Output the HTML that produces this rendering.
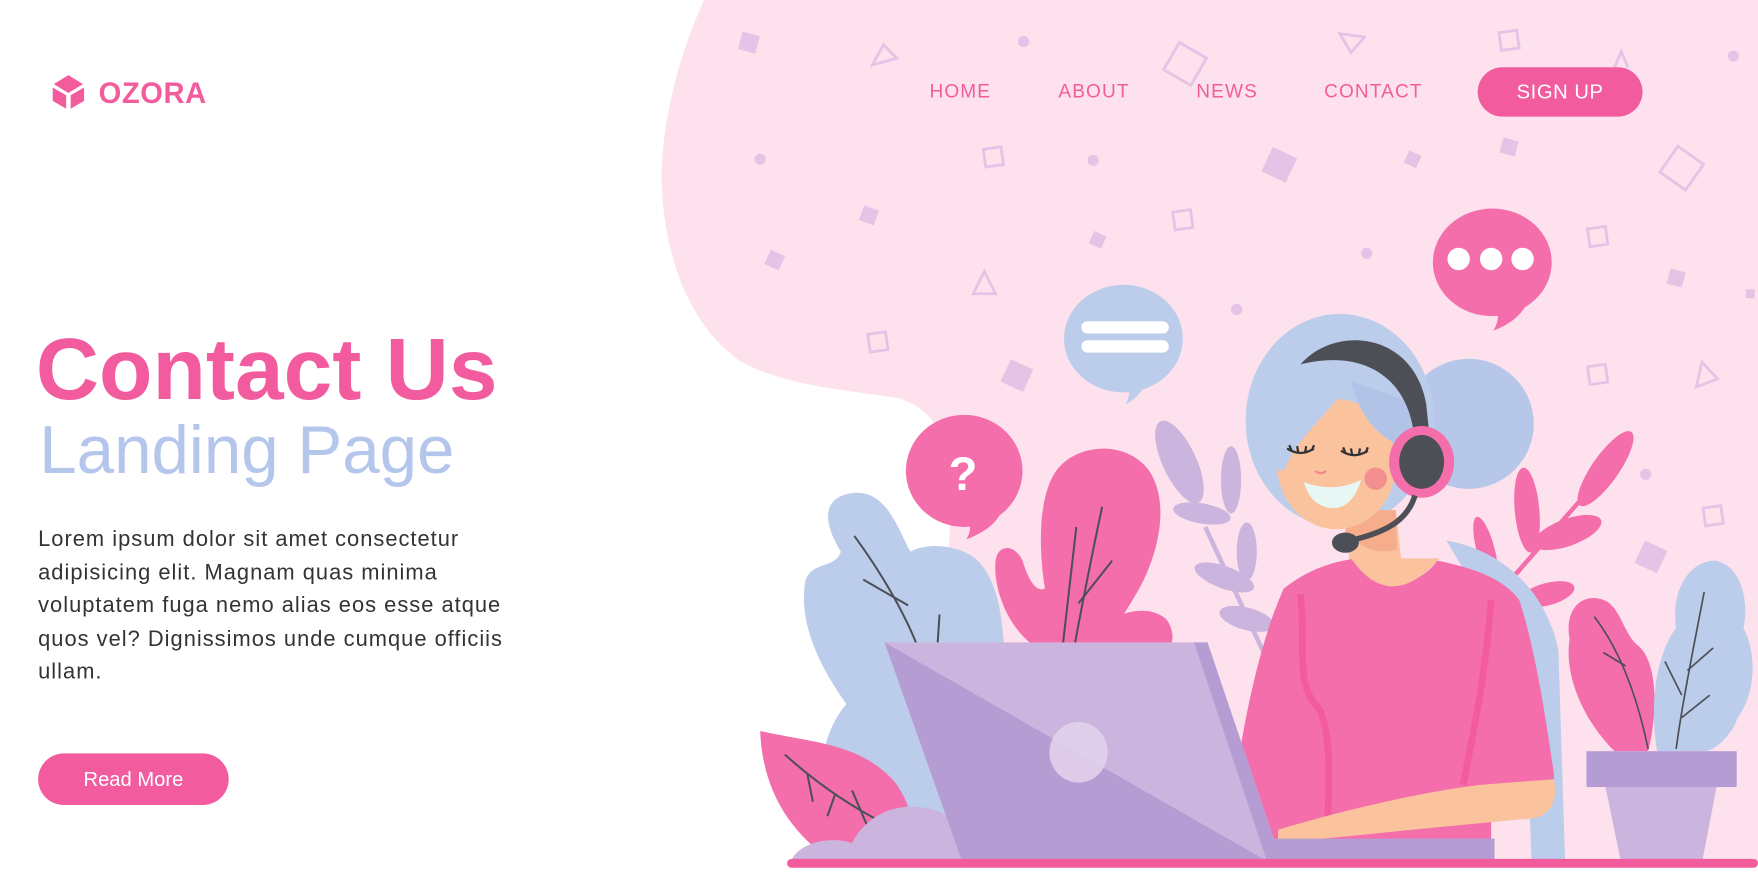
<!DOCTYPE html>
<html><head><meta charset="utf-8"><style>
html,body{margin:0;padding:0;width:1758px;height:879px;overflow:hidden;background:#fff}
#w{position:absolute;left:0;top:0;width:1568px;height:784px;transform:scale(1.12117);transform-origin:0 0;font-family:"Liberation Sans",sans-serif}
.a{position:absolute;white-space:nowrap}
.nav{font-size:17px;color:#f25c9c;top:72px;letter-spacing:1px}
</style></head><body><div id="w">
<svg width="1568" height="784" viewBox="0 0 1568 784" style="position:absolute;left:0;top:0">
<path d="M628,0 C605,50 590,110 590,160 C592,230 615,290 660,322 C700,345 760,348 800,355 C830,362 845,390 850,420 L840,600 L760,770 L1568,770 L1568,0 Z" fill="#fde2ed"/>
<g fill="#e4c3e6">
<rect x="660" y="30" width="16" height="16" transform="rotate(15 668 38)"/>
<rect x="768" y="185" width="14" height="14" transform="rotate(20 775 192)"/>
<rect x="684" y="225" width="14" height="14" transform="rotate(25 691 232)"/>
<rect x="973" y="208" width="12" height="12" transform="rotate(25 979 214)"/>
<rect x="896" y="324" width="22" height="22" transform="rotate(25 907 335)"/>
<rect x="1129" y="135" width="24" height="24" transform="rotate(25 1141 147)"/>
<rect x="1254" y="136" width="12" height="12" transform="rotate(25 1260 142)"/>
<rect x="1339" y="124" width="14" height="14" transform="rotate(15 1346 131)"/>
<rect x="1488" y="241" width="14" height="14" transform="rotate(15 1495 248)"/>
<rect x="1461" y="486" width="22" height="22" transform="rotate(25 1473 498)"/>
<rect x="1557" y="258" width="8" height="8"/>
<circle cx="913" cy="37" r="5"/><circle cx="678" cy="142" r="5"/><circle cx="975" cy="143" r="5"/><circle cx="1219" cy="226" r="5"/><circle cx="1103" cy="276" r="5"/><circle cx="1468" cy="423" r="5"/><circle cx="1546" cy="50" r="5"/>
</g>
<g fill="none" stroke="#e4c3e6" stroke-width="2.5">
<rect x="1043" y="43" width="28" height="28" transform="rotate(30 1057 57)"/>
<rect x="878" y="132" width="16" height="16" transform="rotate(-8 886 140)"/>
<rect x="1047" y="188" width="16" height="16" transform="rotate(-8 1055 196)"/>
<rect x="775" y="297" width="16" height="16" transform="rotate(-8 783 305)"/>
<rect x="1338" y="28" width="16" height="16" transform="rotate(-8 1346 36)"/>
<rect x="1417" y="203" width="16" height="16" transform="rotate(-8 1425 211)"/>
<rect x="1417" y="326" width="16" height="16" transform="rotate(-8 1425 334)"/>
<rect x="1486" y="136" width="28" height="28" transform="rotate(35 1500 150)"/>
<rect x="1520" y="452" width="16" height="16" transform="rotate(-8 1528 460)"/>
<path d="M778,58 L788,40 L800,52 Z"/><path d="M868,262 L878,242 L888,262 Z"/><path d="M1195,30 L1217,33 L1205,47 Z"/><path d="M1513,345 L1518,323 L1532,338 Z"/><path d="M1440,60 L1446,46 L1452,60"/>
</g>
<ellipse cx="1002" cy="302" rx="53" ry="48" fill="#bccdeb"/><path d="M985,345 L1025,335 C1020,350 1012,356 1004,361 C1008,352 1008,348 1005,345 Z" fill="#bccdeb"/>
<g stroke="#fff" stroke-width="11" stroke-linecap="round"><line x1="970" y1="292" x2="1037" y2="292"/><line x1="970" y1="309" x2="1037" y2="309"/></g>
<ellipse cx="1331" cy="234" rx="53" ry="48" fill="#f36eab"/><path d="M1315,275 L1365,265 C1358,282 1345,290 1332,295 C1336,288 1337,282 1335,277 Z" fill="#f36eab"/>
<g fill="#fff"><circle cx="1301" cy="231" r="10"/><circle cx="1330" cy="231" r="10"/><circle cx="1358" cy="231" r="10"/></g>
<ellipse cx="860" cy="420" rx="52" ry="50" fill="#f36eab"/><path d="M845,460 L895,452 C890,468 875,476 862,481 C866,474 866,468 864,462 Z" fill="#f36eab"/>
<text x="859" y="437" font-family="Liberation Sans" font-weight="bold" font-size="42" fill="#fff" text-anchor="middle">?</text>
<g fill="#cbb4de"><path d="M1075,470 L1140,610" stroke="#cbb4de" stroke-width="4"/>
<ellipse cx="1052" cy="412" rx="15" ry="40" transform="rotate(-25 1052 412)"/><ellipse cx="1098" cy="428" rx="9" ry="30"/><ellipse cx="1072" cy="458" rx="26" ry="9" transform="rotate(10 1072 458)"/><ellipse cx="1112" cy="492" rx="9" ry="26"/><ellipse cx="1092" cy="515" rx="28" ry="10" transform="rotate(20 1092 515)"/><ellipse cx="1112" cy="552" rx="25" ry="10" transform="rotate(15 1112 552)"/></g>
<g fill="#f36eab"><path d="M1345,520 L1450,400" stroke="#f36eab" stroke-width="4"/>
<ellipse cx="1432" cy="418" rx="12" ry="40" transform="rotate(35 1432 418)"/><ellipse cx="1398" cy="475" rx="32" ry="12" transform="rotate(-20 1398 475)"/><ellipse cx="1362" cy="455" rx="11" ry="38" transform="rotate(-5 1362 455)"/><ellipse cx="1325" cy="490" rx="8" ry="30" transform="rotate(-15 1325 490)"/><ellipse cx="1380" cy="530" rx="25" ry="10" transform="rotate(-15 1380 530)"/></g>
<path d="M1440,670 C1410,640 1395,600 1400,570 C1395,545 1410,528 1430,535 C1445,540 1448,565 1460,575 C1480,590 1478,640 1470,670 Z" fill="#f36eab"/>
<path d="M1478,670 C1470,620 1480,580 1495,560 C1490,530 1505,500 1530,500 C1555,505 1560,540 1555,560 C1568,585 1565,620 1550,640 C1545,655 1530,670 1520,670 Z" fill="#bccdeb"/>
<g stroke="#4d4f57" stroke-width="1.5" fill="none"><path d="M1422,550 C1445,580 1460,620 1470,668"/><path d="M1430,582 L1450,594"/><path d="M1520,528 C1510,580 1500,630 1495,668"/><path d="M1505,598 L1528,578"/><path d="M1500,640 L1525,620"/><path d="M1485,590 L1500,620"/></g>
<rect x="1415" y="670" width="134" height="32" fill="#b59dd3"/>
<path d="M1432,702 L1531,702 L1518,770 L1446,770 Z" fill="#cbb4de"/>
<path d="M745,770 C720,700 735,650 755,628 C735,600 712,560 718,520 C722,500 745,508 750,492 C735,468 732,445 758,440 C790,435 800,470 812,492 C830,482 860,488 872,500 C892,520 896,560 896,600 L900,770 Z" fill="#bccdeb"/>
<path d="M930,580 C905,570 885,530 888,500 C890,485 905,485 912,500 C918,520 925,528 932,525 C925,480 928,440 942,420 C960,395 1005,392 1025,420 C1045,450 1032,500 1012,532 C998,555 990,570 992,552 C1005,545 1025,540 1040,552 C1050,565 1045,580 1040,580 Z" fill="#f36eab"/>
<path d="M678,652 C720,662 770,662 800,700 C820,730 818,760 800,770 L745,770 C700,740 680,700 678,652 Z" fill="#f36eab"/>
<g stroke="#4d4f57" stroke-width="1.8" fill="none"><path d="M762,478 C800,530 825,580 838,640"/><path d="M770,517 L810,540"/><path d="M838,548 L836,578"/><path d="M960,470 L948,575"/><path d="M983,452 C975,490 965,540 958,578"/><path d="M992,500 L962,538"/><path d="M700,673 C730,700 760,720 790,735"/><path d="M720,690 L725,715"/><path d="M745,708 L738,728"/><path d="M760,705 L775,740"/></g>
<path d="M705,770 C710,752 740,745 760,752 C775,722 810,712 840,725 C855,735 860,760 860,770 Z" fill="#cbb4de"/>
<path d="M1290,482 C1335,490 1378,522 1390,580 L1396,770 L1366,770 L1360,600 Z" fill="#bccdeb"/>
<rect x="1146" y="640" width="20" height="130" fill="#bccdeb"/>
<circle cx="1310" cy="378" r="58" fill="#b6c7e9"/>
<ellipse cx="1195" cy="375" rx="84" ry="95" fill="#bccdeb"/>
<path d="M1200,455 L1245,455 L1252,520 L1205,520 Z" fill="#fac39e"/>
<path d="M1200,455 L1245,455 L1246,490 C1230,495 1215,490 1200,475 Z" fill="#f5ad8c"/>
<path d="M1095,770 C1100,680 1120,580 1145,525 C1170,505 1195,500 1210,498 C1225,520 1260,530 1282,500 C1312,506 1340,515 1355,535 C1370,580 1380,650 1386,690 L1386,700 L1330,705 L1330,770 Z" fill="#f36eab"/>
<path d="M1205,498 Q1240,548 1284,498 Z" fill="#fac39e"/>
<g stroke="#f25c9c" stroke-width="6" fill="none"><path d="M1160,530 C1165,580 1155,610 1175,630 C1190,650 1185,720 1182,770"/><path d="M1330,535 C1325,600 1315,650 1305,700"/></g>
<path d="M1320,700 L1386,695 C1390,715 1382,728 1366,730 C1300,736 1210,745 1140,752 L1140,740 C1200,722 1270,706 1320,700 Z" fill="#fac39e"/>
<ellipse cx="1192" cy="414" rx="53" ry="58" fill="#fac39e"/>
<path d="M1112,390 C1112,330 1160,290 1215,300 C1250,306 1270,330 1275,360 L1260,400 C1230,395 1212,370 1205,340 C1185,370 1160,385 1145,420 C1130,415 1115,405 1112,390 Z" fill="#bccdeb"/>
<path d="M1205,340 C1212,370 1232,395 1258,400 L1262,360 Z" fill="#b1c3e7"/>
<g stroke="#333" stroke-width="2" fill="none"><path d="M1148,400 Q1160,408 1172,400"/><path d="M1196,402 Q1208,410 1220,402"/><path d="M1152,402 L1150,397 M1158,404 L1157,398 M1164,404 L1165,398 M1170,402 L1172,397 M1200,404 L1198,399 M1206,406 L1205,400 M1212,406 L1213,400 M1218,404 L1220,399"/></g>
<path d="M1163,430 Q1190,440 1214,428 Q1206,455 1186,453 Q1168,450 1163,430 Z" fill="#e8f7f4"/>
<path d="M1173,420 Q1178,424 1183,420" stroke="#f08a8a" stroke-width="2" fill="none"/>
<circle cx="1227" cy="427" r="10" fill="#f48f8f"/>
<path d="M1160,325 C1190,290 1260,295 1272,360 L1276,398 L1262,398 C1260,340 1220,310 1160,325 Z" fill="#4d4f57"/>
<ellipse cx="1268" cy="412" rx="29" ry="32" fill="#f36eab"/><ellipse cx="1268" cy="412" rx="20" ry="24" fill="#4d4f57"/>
<path d="M1262,442 C1255,465 1235,475 1205,482" stroke="#4d4f57" stroke-width="5" fill="none"/>
<ellipse cx="1200" cy="484" rx="12" ry="9" fill="#4d4f57"/>
<path d="M789,573 L1077,573 L1143,768 L858,768 Z" fill="#cbb4de"/>
<path d="M789,573 L1130,768 L858,768 Z" fill="#b59dd3"/>
<path d="M1065,573 L1077,573 L1143,768 L1130,768 Z" fill="#b59dd3"/>
<rect x="1130" y="748" width="203" height="22" fill="#b59dd3"/>
<ellipse cx="962" cy="671" rx="26" ry="27" fill="#e4d3ec" opacity=".85"/>
<rect x="702" y="766" width="866" height="8" rx="4" fill="#f25c9c"/>
<path d="M61,67 L74,75 L61,83 L48,75 Z" fill="#f25c9c"/><path d="M47,78 L59,85 L59,97 L47,90 Z" fill="#f25c9c"/><path d="M75,78 L63,85 L63,97 L75,90 Z" fill="#f25c9c"/>
</svg>
<div class="a" style="left:88px;top:68px;font-size:26px;font-weight:bold;color:#f25c9c;letter-spacing:0.5px">OZORA</div>
<div class="a nav" style="left:829px">HOME</div>
<div class="a nav" style="left:944px">ABOUT</div>
<div class="a nav" style="left:1067px">NEWS</div>
<div class="a nav" style="left:1181px">CONTACT</div>
<div class="a" style="left:1318px;top:60px;width:147px;height:44px;border-radius:22px;background:#f25c9f;color:#fff;font-size:18px;letter-spacing:0.5px;line-height:44px;text-align:center">SIGN UP</div>
<div class="a" style="left:32px;top:284px;font-size:78px;font-weight:bold;color:#f25c9f;line-height:90px">Contact Us</div>
<div class="a" style="left:35px;top:368px;font-size:60px;color:#b5c6ec;line-height:68px">Landing Page</div>
<div class="a" style="left:34px;top:467px;font-size:19.5px;letter-spacing:0.9px;color:#333;line-height:29.5px">Lorem ipsum dolor sit amet consectetur<br>adipisicing elit. Magnam quas minima<br>voluptatem fuga nemo alias eos esse atque<br>quos vel? Dignissimos unde cumque officiis<br>ullam.</div>
<div class="a" style="left:34px;top:672px;width:170px;height:46px;border-radius:23px;background:#f25c9f;color:#fff;font-size:18px;line-height:46px;text-align:center">Read More</div>
</div></body></html>
